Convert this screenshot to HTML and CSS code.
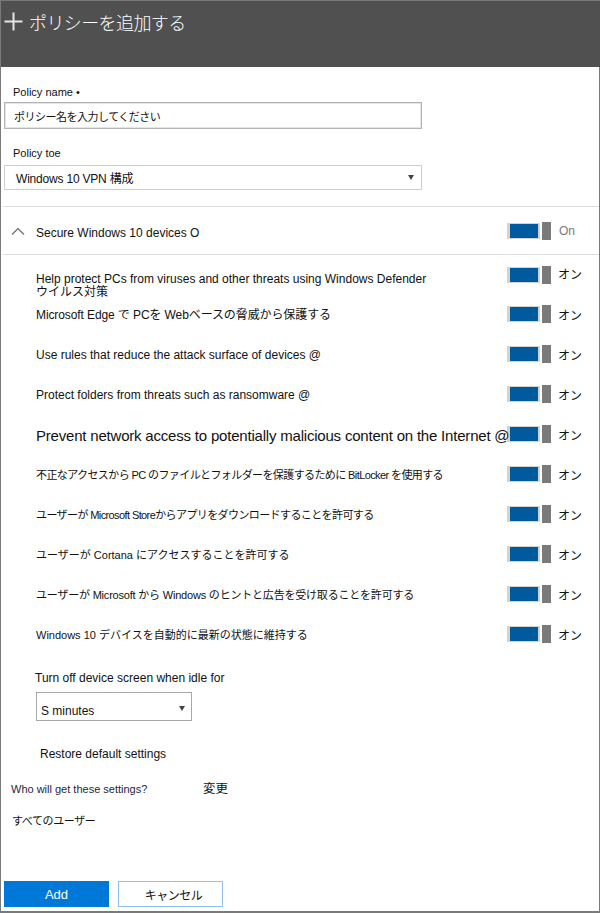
FILE: index.html
```html
<!DOCTYPE html>
<html lang="ja">
<head>
<meta charset="utf-8">
<title>ポリシーを追加する</title>
<link rel="stylesheet" href="styles.css">
</head>
<body>
<div class="frame">
  <header class="header">
    <svg class="plus" width="19" height="19" viewBox="0 0 19 19"><path d="M9.5 0.5V18.5M0.5 9.5H18.5" stroke="#e6e6e6" stroke-width="2" fill="none"/></svg>
    <h1 class="title">ポリシーを追加する</h1>
  </header>

  <div class="form">
    <div class="label label-first">Policy name •</div>
    <div class="input"><span class="input-text">ポリシー名を入力してください</span></div>
    <div class="label label-second">Policy toe</div>
    <div class="select">
      <span class="select-text">Windows 10 VPN 構成</span>
      <span class="arrow"></span>
    </div>
  </div>

  <div class="sep sep-top"></div>

  <div class="section">
    <svg class="chev" width="14" height="8" viewBox="0 0 14 8"><path d="M1 7.5L7 1.5L13 7.5" stroke="#6b6b6b" stroke-width="1.2" fill="none"/></svg>
    <span class="section-text">Secure Windows 10 devices O</span>
    <div class="toggle"><span class="track"><span class="fill"></span></span><span class="knob"></span></div>
    <span class="state state-gray">On</span>
  </div>

  <div class="sep"></div>

  <div class="rows">
    <div class="row row-first">
      <div class="row-text two-line">Help protect PCs from viruses and other threats using Windows Defender<br>ウイルス対策</div>
      <div class="toggle"><span class="track"><span class="fill"></span></span><span class="knob"></span></div>
      <span class="state">オン</span>
    </div>
    <div class="row">
      <div class="row-text edge">Microsoft Edge で PCを Webベースの脅威から保護する</div>
      <div class="toggle"><span class="track"><span class="fill"></span></span><span class="knob"></span></div>
      <span class="state">オン</span>
    </div>
    <div class="row">
      <div class="row-text">Use rules that reduce the attack surface of devices @</div>
      <div class="toggle"><span class="track"><span class="fill"></span></span><span class="knob"></span></div>
      <span class="state">オン</span>
    </div>
    <div class="row">
      <div class="row-text">Protect folders from threats such as ransomware @</div>
      <div class="toggle"><span class="track"><span class="fill"></span></span><span class="knob"></span></div>
      <span class="state">オン</span>
    </div>
    <div class="row">
      <div class="row-text big">Prevent network access to potentially malicious content on the Internet @</div>
      <div class="toggle"><span class="track"><span class="fill"></span></span><span class="knob"></span></div>
      <span class="state">オン</span>
    </div>
    <div class="row">
      <div class="row-text jp tight">不正なアクセスから PC のファイルとフォルダーを保護するために BitLocker を使用する</div>
      <div class="toggle"><span class="track"><span class="fill"></span></span><span class="knob"></span></div>
      <span class="state">オン</span>
    </div>
    <div class="row">
      <div class="row-text jp tight">ユーザーが Microsoft Storeからアプリをダウンロードすることを許可する</div>
      <div class="toggle"><span class="track"><span class="fill"></span></span><span class="knob"></span></div>
      <span class="state">オン</span>
    </div>
    <div class="row">
      <div class="row-text jp">ユーザーが Cortana にアクセスすることを許可する</div>
      <div class="toggle"><span class="track"><span class="fill"></span></span><span class="knob"></span></div>
      <span class="state">オン</span>
    </div>
    <div class="row">
      <div class="row-text jp semi">ユーザーが Microsoft から Windows のヒントと広告を受け取ることを許可する</div>
      <div class="toggle"><span class="track"><span class="fill"></span></span><span class="knob"></span></div>
      <span class="state">オン</span>
    </div>
    <div class="row">
      <div class="row-text jp">Windows 10 デバイスを自動的に最新の状態に維持する</div>
      <div class="toggle"><span class="track"><span class="fill"></span></span><span class="knob"></span></div>
      <span class="state">オン</span>
    </div>
  </div>

  <div class="idle">
    <div class="idle-label">Turn off device screen when idle for</div>
    <div class="idle-select">
      <span class="idle-text">S minutes</span>
      <span class="arrow"></span>
    </div>
    <div class="restore">Restore default settings</div>
  </div>

  <div class="who">
    <span class="who-text">Who will get these settings?</span>
    <span class="change">変更</span>
  </div>
  <div class="all">すべてのユーザー</div>

  <div class="buttons">
    <button class="btn btn-primary">Add</button>
    <button class="btn btn-secondary">キャンセル</button>
  </div>
</div>
</body>
</html>
```

FILE: styles.css
```css
* { box-sizing: border-box; }

html, body {
  margin: 0;
  padding: 0;
  background: #ffffff;
}

body {
  font-family: "Liberation Sans", "Noto Sans CJK JP", sans-serif;
  color: #111111;
  font-size: 12px;
}

.frame {
  width: 600px;
  height: 913px;
  border: 1px solid #7a7a7a;
  border-bottom-width: 2px;
  border-top: none;
  display: flex;
  flex-direction: column;
}

.header {
  height: 67px;
  background: #505050;
  border-top: 1px solid #787878;
  display: flex;
  align-items: flex-start;
  padding: 11px 0 0 3px;
  gap: 6px;
  margin: 0 -1px 0 0;
}

.plus { flex: none; }

.title {
  margin: 0;
  font-family: "Noto Sans CJK JP", sans-serif;
  font-weight: 300;
  font-size: 18px;
  line-height: 20px;
  letter-spacing: -0.6px;
  color: #ffffff;
}

.form {
  padding: 0 0 0 3px;
  display: flex;
  flex-direction: column;
}

.label {
  font-size: 11px;
  line-height: 13px;
  margin-left: 9px;
  color: #111;
}
.label-first { margin-top: 19px; }
.label-second { margin-top: 18px; }

.input {
  margin-top: 3px;
  width: 418px;
  height: 27px;
  border: 1px solid #b4b4b4;
  box-shadow: inset 0 0 0 1px #e4e4e4;
  display: flex;
  align-items: center;
  padding-left: 9px;
}
.input-text {
  font-size: 11px;
  letter-spacing: -0.5px;
  font-family: "Noto Sans CJK JP", sans-serif;
  color: #111;
}

.select {
  margin-top: 5px;
  width: 418px;
  height: 25px;
  border: 1px solid #cfcfcf;
  display: flex;
  align-items: center;
  justify-content: space-between;
  padding: 0 7px 0 11px;
}
.select-text { font-size: 12px; letter-spacing: -0.2px; }

.arrow {
  width: 0;
  height: 0;
  border-left: 3px solid transparent;
  border-right: 3px solid transparent;
  border-top: 5px solid #444;
}

.sep {
  height: 1px;
  background: #dcdcdc;
  margin: 0 0 0 2px;
}
.sep-top { margin-top: 16px; }

.section {
  height: 47px;
  display: flex;
  align-items: center;
  padding-left: 10px;
}
.chev { flex: none; margin-top: 0; }
.section-text {
  margin-left: 11px;
  margin-top: 5px;
  width: 471px;
  font-size: 12px;
}
.state {
  margin-left: 7px;
  font-family: "Noto Sans CJK JP", sans-serif;
  font-size: 12px;
  color: #111;
}
.state-gray {
  font-family: "Liberation Sans", sans-serif;
  color: #7a7a7a;
  margin-left: 8px;
}

.toggle {
  flex: none;
  display: flex;
  align-items: center;
  gap: 2px;
  width: 44px;
}
.track {
  width: 33px;
  height: 16px;
  background: #d3d3d3;
  padding: 1px 2px 1px 3px;
  display: flex;
}
.fill {
  flex: 1;
  background: #005a9e;
}
.knob {
  width: 9px;
  height: 18px;
  background: #7a7a7a;
}

.rows {
  display: flex;
  flex-direction: column;
}
.row {
  height: 40px;
  display: flex;
  align-items: center;
  padding-left: 35px;
}
.row-first {
  height: 39px;
  align-items: flex-start;
}
.row-first .toggle { margin-top: 11px; }
.row-first .state { margin-top: 10px; }

.row-text {
  width: 471px;
  flex: none;
  white-space: nowrap;
  font-size: 12px;
  line-height: 14px;
  margin-top: 2px;
}
.two-line {
  margin-top: 18px;
  line-height: 13px;
}
.edge { letter-spacing: -0.1px; }
.jp { font-size: 11px; }
.jp.tight { letter-spacing: -0.6px; }
.jp.semi { letter-spacing: -0.2px; }
.big {
  font-size: 15px;
  line-height: 17px;
  letter-spacing: -0.2px;
  position: relative;
  z-index: 2;
}
.row .toggle { position: relative; z-index: 1; }

.idle {
  padding-left: 34px;
  display: flex;
  flex-direction: column;
}
.idle-label {
  margin-top: 17px;
  font-size: 12px;
  line-height: 14px;
}
.idle-select {
  margin-top: 7px;
  margin-left: 1px;
  width: 156px;
  height: 29px;
  border: 1px solid #a8a8a8;
  display: flex;
  align-items: flex-start;
  justify-content: space-between;
  padding: 11px 6px 0 4px;
}
.idle-text {
  font-size: 12px;
  line-height: 14px;
}
.idle-select .arrow { margin-top: 2px; }

.restore {
  margin-top: 26px;
  margin-left: 5px;
  font-size: 12px;
  line-height: 14px;
}

.who {
  margin-top: 21px;
  padding-left: 10px;
  display: flex;
  align-items: center;
}
.who-text {
  font-size: 11px;
  line-height: 13px;
  color: #1f1f3a;
  width: 192px;
}
.change {
  font-family: "Noto Sans CJK JP", sans-serif;
  font-size: 12.5px;
  margin-top: -4px;
}

.all {
  margin-top: 16px;
  padding-left: 11px;
  font-family: "Noto Sans CJK JP", sans-serif;
  font-size: 11px;
  letter-spacing: -0.4px;
  line-height: 14px;
}

.buttons {
  margin-top: auto;
  padding: 0 0 4px 3px;
  display: flex;
  gap: 9px;
}
.btn {
  width: 105px;
  height: 26px;
  margin: 0;
  font-size: 13px;
  font-family: "Liberation Sans", "Noto Sans CJK JP", sans-serif;
  cursor: pointer;
}
.btn-primary {
  background: #0078d7;
  border: 1px solid #0078d7;
  color: #ffffff;
}
.btn-secondary {
  background: #ffffff;
  border: 1px solid #8ec1ee;
  color: #111;
  font-size: 12px;
  letter-spacing: -0.5px;
  padding-left: 12px;
}
```
